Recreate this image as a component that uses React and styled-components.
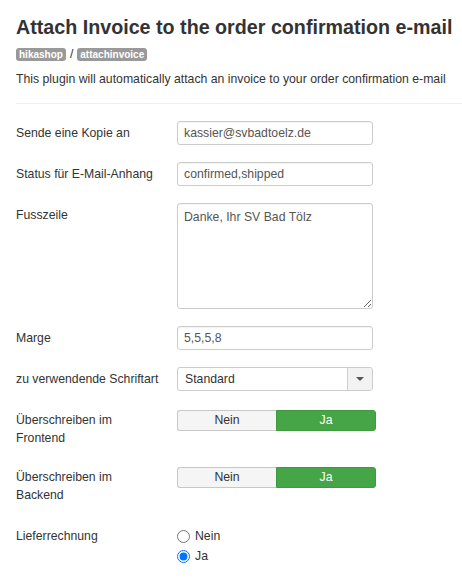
import React from "react";
import styled, { createGlobalStyle } from "styled-components";

const Global = createGlobalStyle`
  html, body { margin: 0; padding: 0; background: #fff; }
  body { font-family: "Liberation Sans", Arial, sans-serif; font-size: 12.25px; line-height: 18px; color: #333; }
  * { box-sizing: border-box; }
`;

const Page = styled.div`
  padding: 14px 0 0 16px;
`;

const Title = styled.h1`
  margin: 0;
  font-size: 19.7px;
  line-height: 26px;
  font-weight: bold;
  color: #333;
  white-space: nowrap;
`;

const Crumbs = styled.div`
  display: flex;
  align-items: center;
  gap: 4px;
  margin-top: 7px;
  color: #333;
  font-size: 12.25px;
  line-height: 14px;
`;

const Badge = styled.span`
  display: inline-block;
  background: #999;
  color: #fff;
  font-size: 10px;
  font-weight: bold;
  line-height: 13px;
  height: 13px;
  padding: 0 3px;
  border-radius: 3px;
`;

const Desc = styled.p`
  margin: 9px 0 0;
  line-height: 18px;
  white-space: nowrap;
`;

const Rule = styled.hr`
  border: 0;
  border-top: 1px solid #eee;
  margin: 15px 0 17px;
`;

const Row = styled.div`
  display: grid;
  grid-template-columns: 146px 1fr;
  column-gap: 15px;
  margin-bottom: ${(p) => p.$after || 17}px;
`;

const Label = styled.div`
  padding-top: 3px;
  line-height: 18px;
`;

const TextInput = styled.input`
  display: block;
  width: 196px;
  height: 24px;
  padding: 3px 6px;
  border: 1px solid #ccc;
  border-radius: 3px;
  font: 12.25px/16px "Liberation Sans", Arial, sans-serif;
  color: #555;
  background: #fff;
  box-shadow: inset 0 1px 1px rgba(0,0,0,0.05);
  outline: none;
`;

const TextArea = styled.textarea`
  display: block;
  width: 196px;
  height: 106px;
  padding: 4px 6px;
  border: 1px solid #ccc;
  border-radius: 3px;
  font: 12.25px/18px "Liberation Sans", Arial, sans-serif;
  color: #555;
  resize: both;
  box-shadow: inset 0 1px 1px rgba(0,0,0,0.05);
  outline: none;
`;

const Select = styled.div`
  display: flex;
  width: 196px;
  height: 24px;
  border: 1px solid #ccc;
  border-radius: 3px;
  background: #fff;
  overflow: hidden;
`;

const SelectText = styled.div`
  flex: 1;
  padding: 0 7px;
  line-height: 22px;
  color: #333;
`;

const SelectArrow = styled.div`
  width: 25px;
  border-left: 1px solid #ccc;
  background: #f2f2f2;
  display: flex;
  align-items: center;
  justify-content: center;
`;

const Caret = styled.span`
  width: 0;
  height: 0;
  border-left: 4px solid transparent;
  border-right: 4px solid transparent;
  border-top: 4px solid #555;
`;

const Toggle = styled.div`
  display: flex;
  width: 199px;
  height: 21px;
  margin-top: 2px;
`;

const ToggleBtn = styled.div`
  flex: 1;
  text-align: center;
  line-height: 19px;
  border: 1px solid ${(p) => (p.$active ? "#3f9a3f" : "#c8c8c8")};
  background: ${(p) => (p.$active ? "#46a546" : "#f5f5f5")};
  color: ${(p) => (p.$active ? "#fff" : "#333")};
  border-radius: ${(p) => (p.$first ? "3px 0 0 3px" : "0 3px 3px 0")};
  ${(p) => (p.$first ? "border-right: 0;" : "")}
`;

const Radios = styled.div`
  display: flex;
  flex-direction: column;
  padding-top: 2px;
`;

const RadioLine = styled.label`
  display: flex;
  align-items: center;
  gap: 5px;
  height: 20px;
  color: #333;
`;

const Radio = styled.input`
  margin: 0;
  width: 13px;
  height: 13px;
`;

export default function App() {
  return (
    <>
      <Global />
      <Page>
        <Title>Attach Invoice to the order confirmation e-mail</Title>
        <Crumbs>
          <Badge>hikashop</Badge>
          <span>/</span>
          <Badge>attachinvoice</Badge>
        </Crumbs>
        <Desc>This plugin will automatically attach an invoice to your order confirmation e-mail</Desc>
        <Rule />
        <Row>
          <Label>Sende eine Kopie an</Label>
          <TextInput readOnly defaultValue="kassier@svbadtoelz.de" />
        </Row>
        <Row>
          <Label>Status für E-Mail-Anhang</Label>
          <TextInput readOnly defaultValue="confirmed,shipped" />
        </Row>
        <Row>
          <Label>Fusszeile</Label>
          <TextArea readOnly defaultValue="Danke, Ihr SV Bad Tölz" />
        </Row>
        <Row>
          <Label>Marge</Label>
          <TextInput readOnly defaultValue="5,5,5,8" />
        </Row>
        <Row>
          <Label>zu verwendende Schriftart</Label>
          <Select>
            <SelectText>Standard</SelectText>
            <SelectArrow><Caret /></SelectArrow>
          </Select>
        </Row>
        <Row $after={18}>
          <Label>Überschreiben im Frontend</Label>
          <Toggle>
            <ToggleBtn $first>Nein</ToggleBtn>
            <ToggleBtn $active>Ja</ToggleBtn>
          </Toggle>
        </Row>
        <Row $after={20}>
          <Label>Überschreiben im Backend</Label>
          <Toggle>
            <ToggleBtn $first>Nein</ToggleBtn>
            <ToggleBtn $active>Ja</ToggleBtn>
          </Toggle>
        </Row>
        <Row>
          <Label>Lieferrechnung</Label>
          <Radios>
            <RadioLine><Radio type="radio" name="lr" readOnly /> Nein</RadioLine>
            <RadioLine><Radio type="radio" name="lr" defaultChecked /> Ja</RadioLine>
          </Radios>
        </Row>
      </Page>
    </>
  );
}
